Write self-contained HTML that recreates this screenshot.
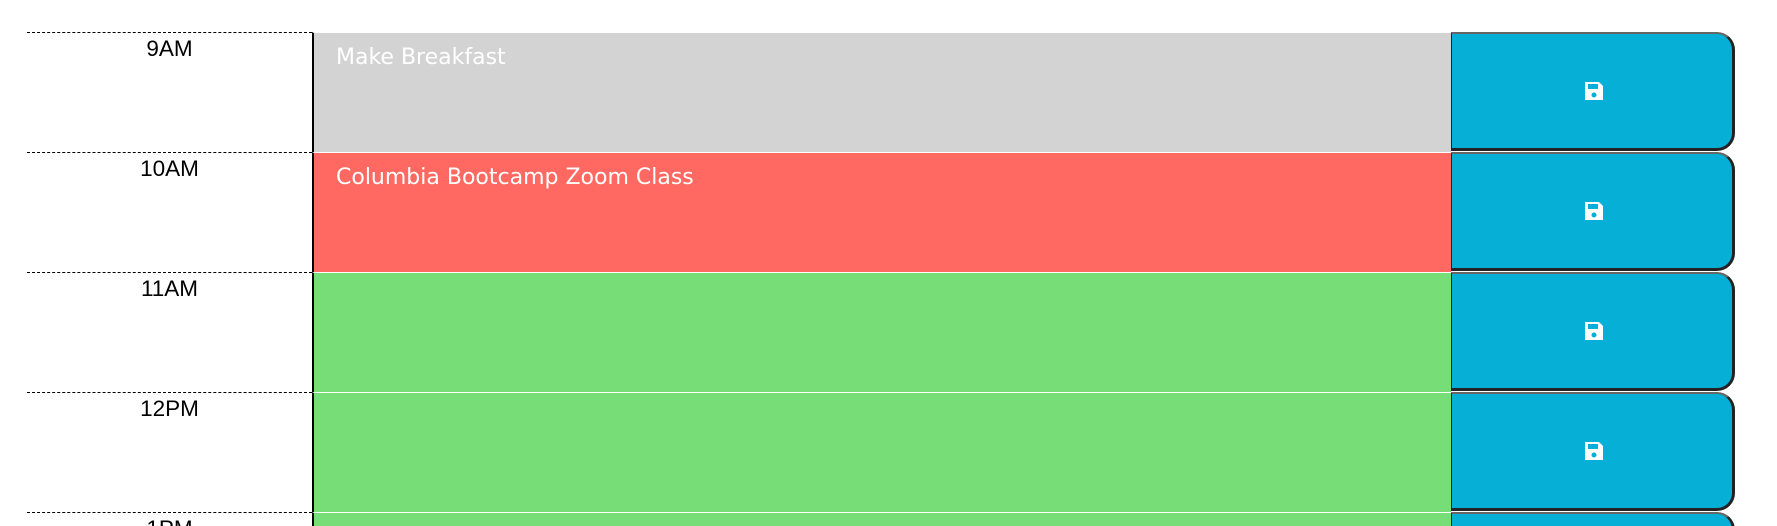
<!DOCTYPE html>
<html style="height:526px;overflow:hidden"><head><style>
body{margin:0;background:#fff;width:1777px;height:526px;overflow:hidden;position:relative;font-family:"Liberation Sans",sans-serif}
.row{position:absolute;left:27px;height:120px;width:1710px}
.hour{position:absolute;left:0;top:0;width:285px;height:120px;border-top:1px dashed #000;box-sizing:border-box;text-align:center;font-size:22.5px;color:#000;padding-top:3px}
.ta{position:absolute;left:285px;top:0;width:1139px;height:120px;box-sizing:border-box;border-left:2px solid #000;border-top:1px solid #fff;color:#fff;font-family:"DejaVu Sans",sans-serif;font-size:22px;padding:12px 22px}
.btn{position:absolute;left:1424px;top:0;width:284px;height:119px;box-sizing:border-box;background:#06afd5;border-top:2px solid #666;border-right:3px solid #222;border-bottom:3px solid #222;border-left:1px solid #222;border-radius:0 18px 18px 0}
.btn svg{position:absolute;left:131px;top:46px}
</style></head><body>
<div class="row" style="top:32px"><div class="hour">9AM</div><div class="ta" style="background:#d3d3d3">Make Breakfast</div><div class="btn"><svg width="22" height="22" viewBox="0 0 22 22"><path d="M2 2h14l4 4v14H2z" fill="#fff"/><rect x="5" y="4" width="10" height="5" fill="#06afd5"/><circle cx="11" cy="15" r="2.5" fill="#06afd5"/></svg></div></div>
<div class="row" style="top:152px"><div class="hour">10AM</div><div class="ta" style="background:#ff6961">Columbia Bootcamp Zoom Class</div><div class="btn"><svg width="22" height="22" viewBox="0 0 22 22"><path d="M2 2h14l4 4v14H2z" fill="#fff"/><rect x="5" y="4" width="10" height="5" fill="#06afd5"/><circle cx="11" cy="15" r="2.5" fill="#06afd5"/></svg></div></div>
<div class="row" style="top:272px"><div class="hour">11AM</div><div class="ta" style="background:#77dd77"></div><div class="btn"><svg width="22" height="22" viewBox="0 0 22 22"><path d="M2 2h14l4 4v14H2z" fill="#fff"/><rect x="5" y="4" width="10" height="5" fill="#06afd5"/><circle cx="11" cy="15" r="2.5" fill="#06afd5"/></svg></div></div>
<div class="row" style="top:392px"><div class="hour">12PM</div><div class="ta" style="background:#77dd77"></div><div class="btn"><svg width="22" height="22" viewBox="0 0 22 22"><path d="M2 2h14l4 4v14H2z" fill="#fff"/><rect x="5" y="4" width="10" height="5" fill="#06afd5"/><circle cx="11" cy="15" r="2.5" fill="#06afd5"/></svg></div></div>
<div class="row" style="top:512px;height:14px;overflow:hidden"><div class="hour">1PM</div><div class="ta" style="background:#77dd77"></div><div class="btn"></div></div>
</body></html>
